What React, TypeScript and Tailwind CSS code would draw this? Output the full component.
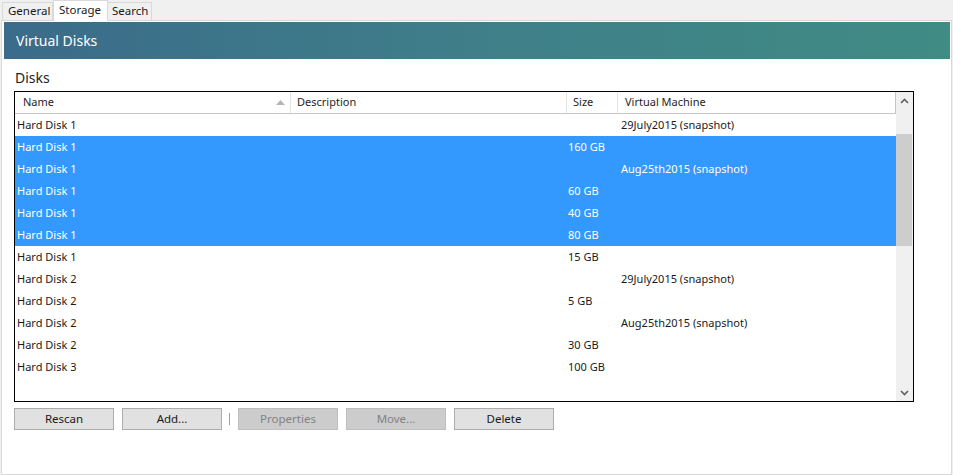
import React from 'react';

type Disk = { name: string; size: string; vm: string; selected?: boolean };

const disks: Disk[] = [
  { name: 'Hard Disk 1', size: '', vm: '29July2015 (snapshot)' },
  { name: 'Hard Disk 1', size: '160 GB', vm: '', selected: true },
  { name: 'Hard Disk 1', size: '', vm: 'Aug25th2015 (snapshot)', selected: true },
  { name: 'Hard Disk 1', size: '60 GB', vm: '', selected: true },
  { name: 'Hard Disk 1', size: '40 GB', vm: '', selected: true },
  { name: 'Hard Disk 1', size: '80 GB', vm: '', selected: true },
  { name: 'Hard Disk 1', size: '15 GB', vm: '' },
  { name: 'Hard Disk 2', size: '', vm: '29July2015 (snapshot)' },
  { name: 'Hard Disk 2', size: '5 GB', vm: '' },
  { name: 'Hard Disk 2', size: '', vm: 'Aug25th2015 (snapshot)' },
  { name: 'Hard Disk 2', size: '30 GB', vm: '' },
  { name: 'Hard Disk 3', size: '100 GB', vm: '' },
];

const cols = 'grid grid-cols-[276px_276px_51px_278px]';

function Chevron({ up }: { up?: boolean }) {
  return (
    <svg width="9" height="6" viewBox="0 0 9 6" fill="none" stroke="#606060" strokeWidth="1.6">
      {up ? <path d="M1 5L4.5 1.5L8 5" /> : <path d="M1 1L4.5 4.5L8 1" />}
    </svg>
  );
}

function Button({ label, disabled }: { label: string; disabled?: boolean }) {
  return (
    <button
      className={`w-[100px] h-[22px] flex items-center justify-center text-[11.5px] border ${
        disabled
          ? 'bg-[#cccccc] border-[#bfbfbf] text-[#838383]'
          : 'bg-[#e1e1e1] border-[#adadad] text-[#1a1a1a]'
      }`}
    >
      {label}
    </button>
  );
}

export default function App() {
  return (
    <div className="w-[953px] h-[475px] bg-[#f0f0f0] overflow-hidden flex flex-col font-['Noto_Sans',sans-serif] text-[#1a1a1a]">
      {/* Tabs */}
      <div className="h-[20px] flex items-end pl-[2px] shrink-0">
        <div className="w-[51px] h-[18px] border border-b-0 border-[#d9d9d9] bg-[#f0f0f0] text-[11.5px] leading-[16px] pl-[5px]">
          General
        </div>
        <div className="relative z-10 w-[55px] h-[21px] -mb-[1px] border border-b-0 border-[#d9d9d9] bg-white text-[11.5px] leading-[17px] pl-[5px]">
          Storage
        </div>
        <div className="w-[44px] h-[18px] border border-b-0 border-l-0 border-[#d9d9d9] bg-[#f0f0f0] text-[11.5px] leading-[16px] pl-[4px]">
          Search
        </div>
      </div>

      {/* Panel */}
      <div className="ml-[1px] w-[951px] flex-1 bg-white border border-[#d9d9d9] pt-[1px] flex flex-col">
        <div className="ml-[2px] mr-[1px] h-[37px] shrink-0 bg-gradient-to-r from-[#3b6b8a] via-[#3f7f89] to-[#408b84] flex items-center pl-[12px] text-[14px] text-white">
          Virtual Disks
        </div>

        <div className="mt-[9px] ml-[13px] text-[14px] leading-[20px] text-[#1e1e1e]">Disks</div>

        {/* List */}
        <div className="mt-[3px] ml-[12px] w-[900px] h-[311px] border border-black flex">
          <div className="w-[881px] flex flex-col">
            <div className={`${cols} h-[22px] shrink-0 border-b border-r border-[#c6c6c6] text-[11px] text-[#1e1e1e]`}>
              <div className="border-r border-[#e5e5e5] pl-[8px] flex items-center justify-between pr-[5px]">
                <span>Name</span>
                <svg width="9" height="5" viewBox="0 0 9 5">
                  <path d="M0 5L4.5 0L9 5Z" fill="#b5b5b5" />
                </svg>
              </div>
              <div className="border-r border-[#e5e5e5] pl-[6px] flex items-center">Description</div>
              <div className="border-r border-[#e5e5e5] pl-[6px] flex items-center">Size</div>
              <div className="pl-[7px] flex items-center">Virtual Machine</div>
            </div>
            {disks.map((d, i) => (
              <div
                key={i}
                className={`${cols} h-[22px] shrink-0 pt-[1px] text-[11px] items-center ${
                  d.selected ? 'bg-[#3399ff] text-white' : 'text-[#1a1a1a]'
                }`}
              >
                <div className="pl-[2px]">{d.name}</div>
                <div />
                <div className="pl-[1px]">{d.size}</div>
                <div className="pl-[3px]">{d.vm}</div>
              </div>
            ))}
          </div>

          {/* Scrollbar */}
          <div className="w-[17px] bg-[#f0f0f0] flex flex-col">
            <div className="h-[17px] flex items-center justify-center">
              <Chevron up />
            </div>
            <div className="flex-1">
              <div className="mt-[25px] h-[112px] w-[16px] bg-[#cdcdcd]" />
            </div>
            <div className="h-[17px] flex items-center justify-center">
              <Chevron />
            </div>
          </div>
        </div>

        {/* Buttons */}
        <div className="mt-[6px] ml-[12px] flex items-center">
          <Button label="Rescan" />
          <div className="ml-[8px]">
            <Button label="Add..." />
          </div>
          <div className="ml-[7px] mr-[8px] w-px h-[12px] bg-[#a0a0a0]" />
          <Button label="Properties" disabled />
          <div className="ml-[8px]">
            <Button label="Move..." disabled />
          </div>
          <div className="ml-[8px]">
            <Button label="Delete" />
          </div>
        </div>
      </div>
    </div>
  );
}
